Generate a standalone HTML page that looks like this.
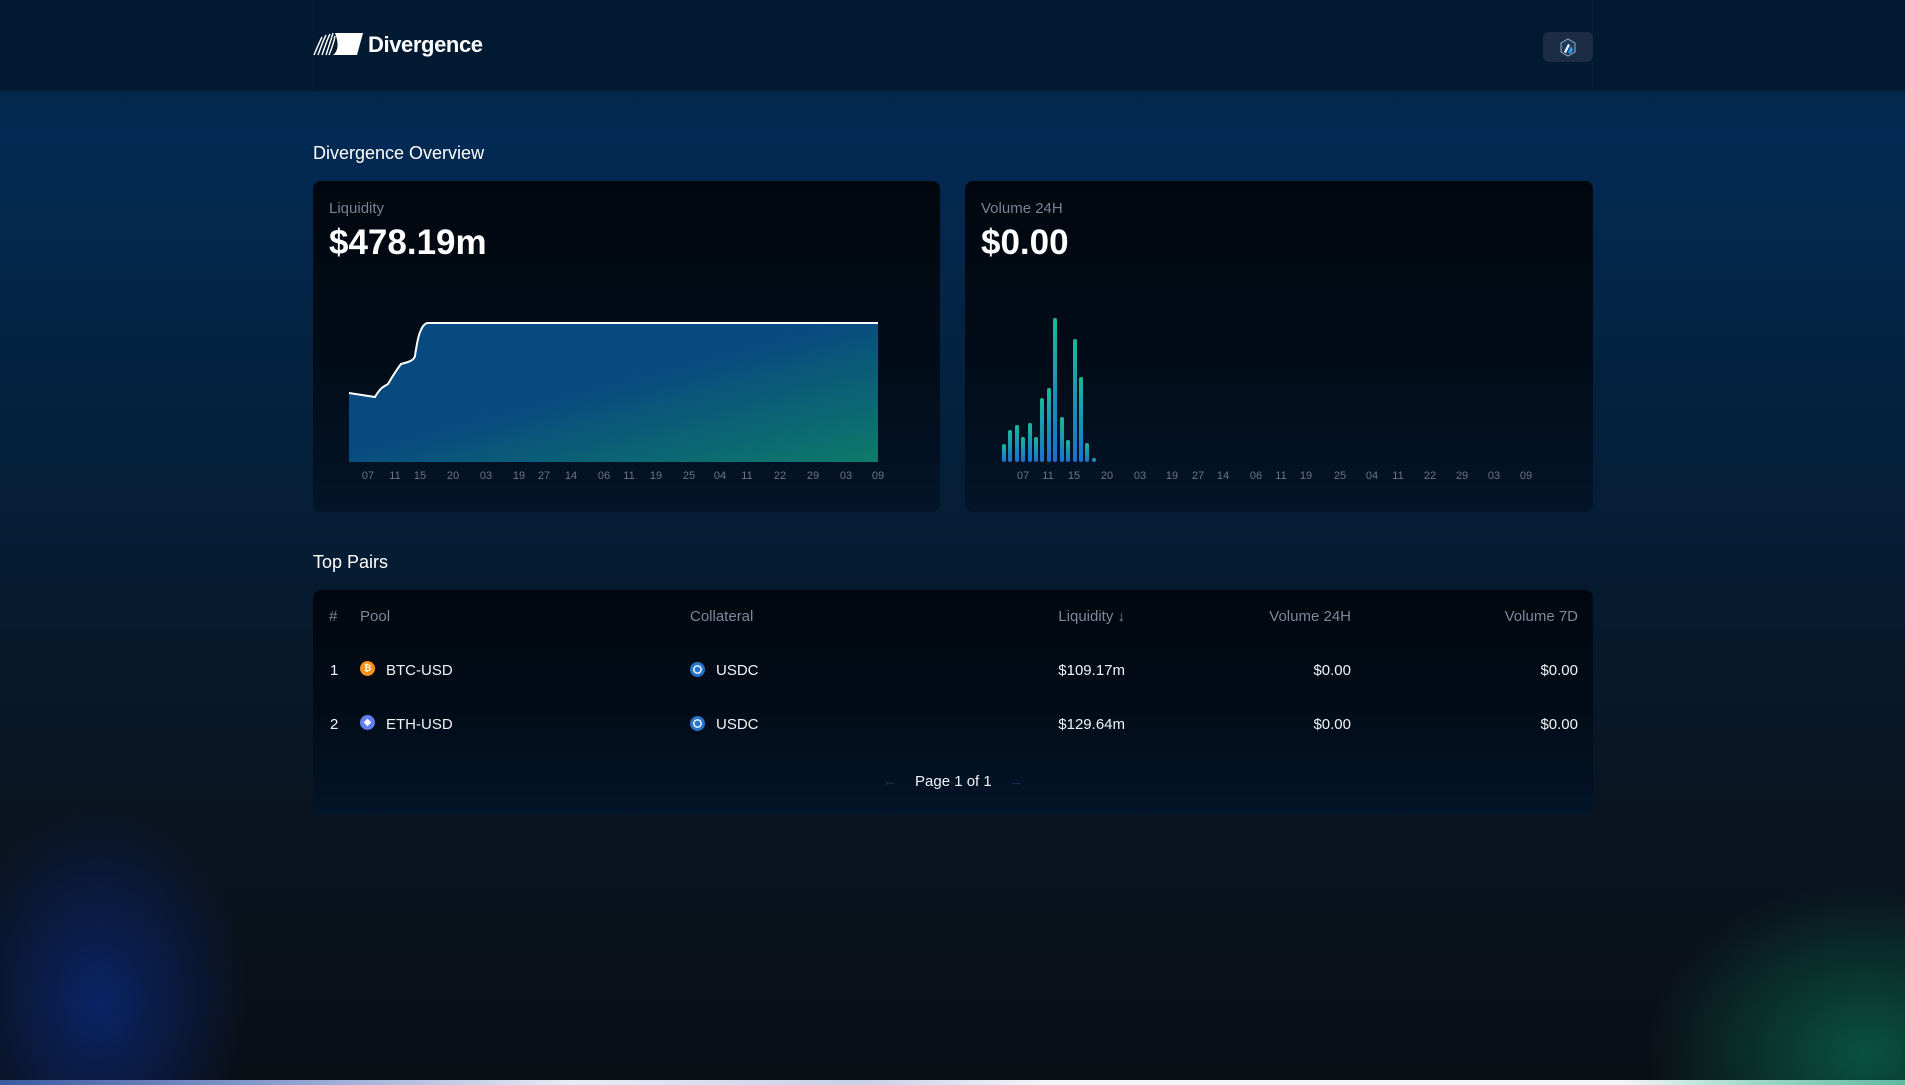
<!DOCTYPE html>
<html><head><meta charset="utf-8"><style>
*{margin:0;padding:0;box-sizing:border-box}
body{width:1905px;height:1085px;overflow:hidden;font-family:"Liberation Sans",sans-serif;color:#fff;position:relative;
background:linear-gradient(180deg,#03254a 90px,#032a55 130px,#04223f 380px,#071a2e 620px,#0a1420 820px,#0a0f16 1085px);}
.bl{position:absolute;left:0;top:760px;width:330px;height:325px;background:radial-gradient(ellipse 60% 80% at 30% 75%,rgba(10,40,120,.8),rgba(10,30,90,0) 75%)}
.gr{position:absolute;right:0;top:880px;width:260px;height:205px;background:radial-gradient(ellipse at 85% 85%,rgba(10,110,80,.7),rgba(10,80,60,0) 70%)}
.stripe{position:absolute;left:0;top:1080px;width:1905px;height:5px;background:linear-gradient(90deg,#3a5aa0,#8da0d0 15%,#e8ecf5 30%,#c8d0e8 45%,#f4f5f8 55%,#f4f5f8 85%,#a0d8c8 92%,#60b8a0)}
.hdr{position:absolute;left:0;top:0;width:1905px;height:91px;background:#021a31}
.hdrin{position:absolute;left:313px;top:0;width:1280px;height:91px;border-left:1px solid #061d36;border-right:1px solid #061d36}
.abs{position:absolute;white-space:nowrap}
.card{position:absolute;background:linear-gradient(180deg,#01070e,#020d1a 60%,#031529);border-radius:8px}
.lbl{color:#7a8395;font-size:15px}
.val{font-size:35px;font-weight:bold}
.th{color:#7f8799;font-size:15px}
.td{font-size:15px;color:#f2f4f7}
.ax{font-size:11px;fill:#6c7586;font-family:"Liberation Sans",sans-serif}
</style></head><body>
<div class="bl"></div><div class="gr"></div>
<div class="hdr"><div class="hdrin"></div></div>
<svg class="abs" style="left:313px;top:31px" width="50" height="26" viewBox="0 0 50 26">
<path d="M22 2 H50 L44 24 H20 Q28 18 22 2Z" fill="#fff"/>
<g stroke="#fff" stroke-width="1.4" fill="none"><path d="M1 24 Q6 12 9 6"/><path d="M5 24 Q10 10 13 4"/><path d="M9 24 Q14 9 17 3"/><path d="M13 24 Q18 9 20 2"/><path d="M16 24 Q21 12 22 5"/></g></svg>
<div class="abs" style="left:368px;top:32px;font-size:22px;font-weight:bold;letter-spacing:-0.4px">Divergence</div>
<div class="abs" style="left:1543px;top:32px;width:50px;height:30px;background:#1c2c44;border-radius:6px"></div>
<svg class="abs" style="left:1559px;top:38px" width="18" height="19" viewBox="0 0 18 19"><path d="M9 1 L16 5 V14 L9 18 L2 14 V5Z" fill="#1b3a5e" stroke="#9bb0c8" stroke-width="1"/><path d="M5 14 L9 6 L11 7 L7 15Z" fill="#fff"/><path d="M9 15 L12 8 L14 12 L12 15Z" fill="#28a0f0"/></svg>

<div class="abs" style="left:313px;top:143px;font-size:18px">Divergence Overview</div>

<div class="card" style="left:313px;top:181px;width:627px;height:331px"></div>
<div class="abs lbl" style="left:329px;top:200px">Liquidity</div>
<div class="abs val" style="left:329px;top:223px">$478.19m</div>
<div class="card" style="left:965px;top:181px;width:628px;height:331px"></div>
<div class="abs lbl" style="left:981px;top:200px">Volume 24H</div>
<div class="abs val" style="left:981px;top:223px">$0.00</div>

<svg class="abs" style="left:0;top:0" width="1905" height="520">
<defs><linearGradient id="ag" x1="0" y1="0" x2="1" y2="1"><stop offset="0.45" stop-color="#084a80"/><stop offset="1" stop-color="#0e7a6a"/></linearGradient>
<linearGradient id="bg" x1="0" y1="0" x2="0" y2="1"><stop offset="0" stop-color="#1bb89a"/><stop offset="1" stop-color="#1a6fd0"/></linearGradient></defs>
<path d="M349 393 L375 397 Q379 390 383 387 L388 384 Q395 372 401 364 L408 362 Q414 360 415 356 Q418 335 421 330 Q424 323 428 323 L878 323 L878 462 L349 462Z" fill="url(#ag)"/>
<path d="M349 393 L375 397 Q379 390 383 387 L388 384 Q395 372 401 364 L408 362 Q414 360 415 356 Q418 335 421 330 Q424 323 428 323 L878 323" fill="none" stroke="#fff" stroke-width="2"/>
<g class="ax" text-anchor="middle">
<text x="368" y="479">07</text><text x="395" y="479">11</text><text x="420" y="479">15</text><text x="453" y="479">20</text><text x="486" y="479">03</text><text x="519" y="479">19</text><text x="544" y="479">27</text><text x="571" y="479">14</text><text x="604" y="479">06</text><text x="629" y="479">11</text><text x="656" y="479">19</text><text x="689" y="479">25</text><text x="720" y="479">04</text><text x="747" y="479">11</text><text x="780" y="479">22</text><text x="813" y="479">29</text><text x="846" y="479">03</text><text x="878" y="479">09</text>
<text x="1023" y="479">07</text><text x="1048" y="479">11</text><text x="1074" y="479">15</text><text x="1107" y="479">20</text><text x="1140" y="479">03</text><text x="1172" y="479">19</text><text x="1198" y="479">27</text><text x="1223" y="479">14</text><text x="1256" y="479">06</text><text x="1281" y="479">11</text><text x="1306" y="479">19</text><text x="1340" y="479">25</text><text x="1372" y="479">04</text><text x="1398" y="479">11</text><text x="1430" y="479">22</text><text x="1462" y="479">29</text><text x="1494" y="479">03</text><text x="1526" y="479">09</text>
</g>
<g fill="url(#bg)">
<rect x="1002" y="444" width="4" height="18" rx="2"/><rect x="1008" y="430" width="4" height="32" rx="2"/><rect x="1015" y="425" width="4" height="37" rx="2"/><rect x="1021" y="437" width="4" height="25" rx="2"/><rect x="1028" y="423" width="4" height="39" rx="2"/><rect x="1034" y="437" width="4" height="25" rx="2"/><rect x="1040" y="398" width="4" height="64" rx="2"/><rect x="1047" y="388" width="4" height="74" rx="2"/><rect x="1053" y="318" width="4" height="144" rx="2"/><rect x="1060" y="417" width="4" height="45" rx="2"/><rect x="1066" y="440" width="4" height="22" rx="2"/><rect x="1073" y="339" width="4" height="123" rx="2"/><rect x="1079" y="377" width="4" height="85" rx="2"/><rect x="1085" y="443" width="4" height="19" rx="2"/><rect x="1092" y="458" width="4" height="4" rx="2"/>
</g>
</svg>

<div class="abs" style="left:313px;top:552px;font-size:18px">Top Pairs</div>
<div class="card" style="left:313px;top:590px;width:1280px;height:225px"></div>
<div class="abs th" style="left:329px;top:608px">#</div>
<div class="abs th" style="left:360px;top:608px">Pool</div>
<div class="abs th" style="left:690px;top:608px">Collateral</div>
<div class="abs th" style="left:1000px;top:608px;width:125px;text-align:right">Liquidity ↓</div>
<div class="abs th" style="left:1200px;top:608px;width:151px;text-align:right">Volume 24H</div>
<div class="abs th" style="left:1420px;top:608px;width:158px;text-align:right">Volume 7D</div>

<div class="abs td" style="left:330px;top:662px">1</div>
<div class="abs" style="left:360px;top:661px;width:15px;height:15px;border-radius:50%;background:#f7931a;color:#fff;font-size:9px;text-align:center;line-height:15px;font-weight:bold">₿</div>
<div class="abs td" style="left:386px;top:662px">BTC-USD</div>
<div class="abs" style="left:690px;top:662px;width:15px;height:15px;border-radius:50%;background:#2775ca;border:3px solid #2775ca;box-shadow:inset 0 0 0 1.5px #fff"></div>
<div class="abs td" style="left:716px;top:662px">USDC</div>
<div class="abs td" style="left:1000px;top:662px;width:125px;text-align:right">$109.17m</div>
<div class="abs td" style="left:1200px;top:662px;width:151px;text-align:right">$0.00</div>
<div class="abs td" style="left:1420px;top:662px;width:158px;text-align:right">$0.00</div>

<div class="abs td" style="left:330px;top:716px">2</div>
<div class="abs" style="left:360px;top:715px;width:15px;height:15px;border-radius:50%;background:#627eea;color:#fff;font-size:10px;text-align:center;line-height:15px">◆</div>
<div class="abs td" style="left:386px;top:716px">ETH-USD</div>
<div class="abs" style="left:690px;top:716px;width:15px;height:15px;border-radius:50%;background:#2775ca;border:3px solid #2775ca;box-shadow:inset 0 0 0 1.5px #fff"></div>
<div class="abs td" style="left:716px;top:716px">USDC</div>
<div class="abs td" style="left:1000px;top:716px;width:125px;text-align:right">$129.64m</div>
<div class="abs td" style="left:1200px;top:716px;width:151px;text-align:right">$0.00</div>
<div class="abs td" style="left:1420px;top:716px;width:158px;text-align:right">$0.00</div>

<div class="abs" style="left:883px;top:773px;color:#1f3a5c;font-size:14px">←</div>
<div class="abs td" style="left:915px;top:773px">Page 1 of 1</div>
<div class="abs" style="left:1009px;top:773px;color:#1f3a5c;font-size:14px">→</div>
<div class="stripe"></div>
</body></html>
